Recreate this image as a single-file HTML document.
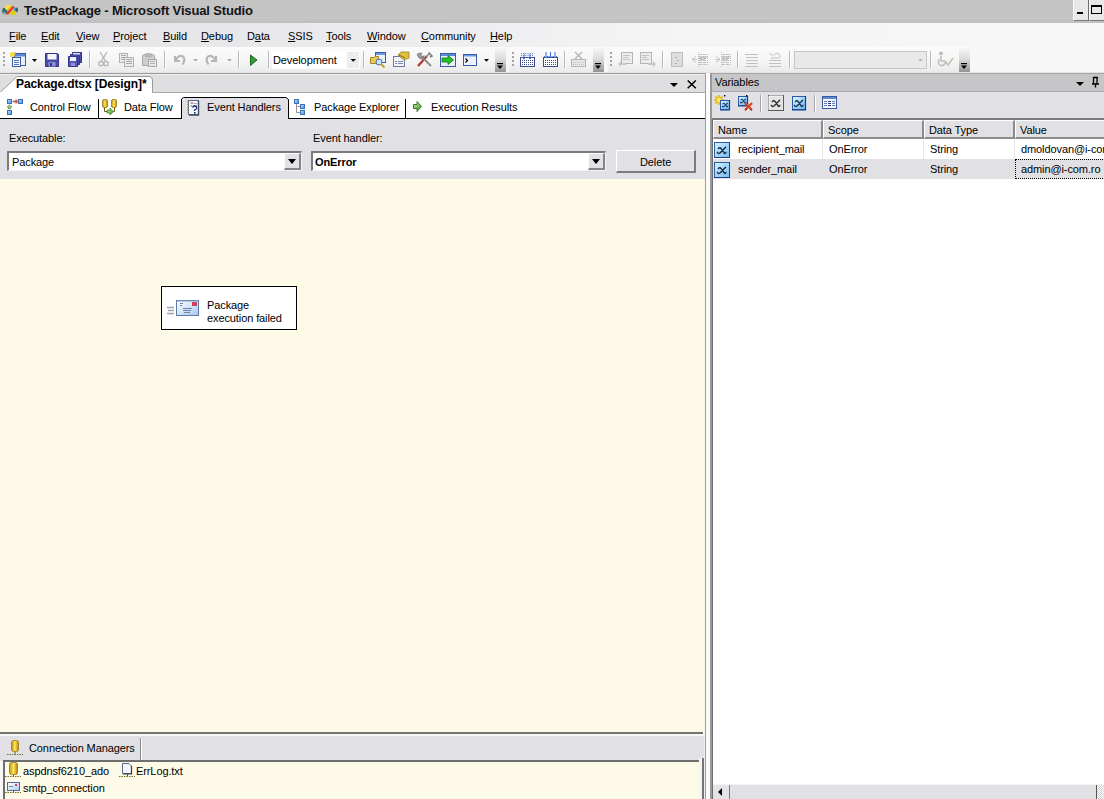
<!DOCTYPE html>
<html><head><meta charset="utf-8">
<style>
*{margin:0;padding:0;box-sizing:border-box}
html,body{width:1104px;height:799px;overflow:hidden;background:#f7f7f7;font-family:"Liberation Sans",sans-serif;font-size:11px;line-height:13px;color:#000}
body{position:relative}
.a{position:absolute}
.t{position:absolute;white-space:nowrap;letter-spacing:-0.1px}
.u{text-decoration:underline;text-underline-offset:1px}
.sep{position:absolute;width:1px;background:#b8b8b8;box-shadow:1px 0 0 #fff}
.grip{position:absolute;width:2px;height:14px;background:repeating-linear-gradient(#a3a3a3 0 2px,transparent 2px 4px)}
.chev{position:absolute;top:48px;width:11px;height:25px;background:linear-gradient(#f6f6f6,#dadada 45%,#8e8e8e)}
.bar{position:absolute;top:47px;height:26px;background:linear-gradient(#fbfbfb,#f5f5f5 55%,#e9e9e9)}
.tri{position:absolute;width:0;height:0;border-style:solid;border-color:#000 transparent transparent transparent}
.combo{position:absolute;background:#fff;border-top:2px solid #7c7c7c;border-left:2px solid #7c7c7c;border-bottom:1px solid #f3f3f3;border-right:1px solid #f3f3f3}
.ddb{position:absolute;background:#e2e1e5;border-right:2px solid #858585;border-bottom:2px solid #858585;border-top:1px solid #fff;border-left:1px solid #fff}
.hdr{position:absolute;height:19px;background:#e1e0e4;border-top:1px solid #fff;border-left:1px solid #fff;border-right:2px solid #8c8c8c;border-bottom:2px solid #8c8c8c}
</style></head><body>
<!-- title bar -->
<div class="a" style="left:0;top:0;width:1104px;height:23px;background:linear-gradient(#c4c4c4,#c4c4c4 72%,#c7c7c9 76%,#c1c1c3 90%,#bfbfc1)"></div>
<span class="t" style="left:24px;top:3px;font-size:13px;line-height:15px;font-weight:bold;color:#141414;letter-spacing:-0.15px">TestPackage - Microsoft Visual Studio</span>
<div class="a" style="left:1073px;top:0;width:16px;height:21px;background:#e8e8ea;border-right:1px solid #6a6a6a;border-bottom:1px solid #7a7a7a;border-left:1px solid #fafafa"></div>
<div class="a" style="left:1077px;top:12px;width:6px;height:2px;background:#000"></div>
<div class="a" style="left:1089px;top:0;width:15px;height:21px;background:#e8e8ea;border-bottom:1px solid #7a7a7a;border-left:1px solid #fafafa"></div>
<div class="a" style="left:1091px;top:5px;width:11px;height:9px;border:1px solid #000;border-top-width:2px"></div>
<!-- menu bar -->
<div class="a" style="left:0;top:23px;width:1104px;height:24px;background:linear-gradient(90deg,#e3e3e6 0,#e9e9eb 290px,#f0f0f2 530px,#f5f5f5 700px,#f7f7f7 100%)"></div>
<span class="t" style="left:9px;top:30px"><span class="u">F</span>ile</span>
<span class="t" style="left:41px;top:30px"><span class="u">E</span>dit</span>
<span class="t" style="left:76px;top:30px"><span class="u">V</span>iew</span>
<span class="t" style="left:113px;top:30px"><span class="u">P</span>roject</span>
<span class="t" style="left:163px;top:30px"><span class="u">B</span>uild</span>
<span class="t" style="left:201px;top:30px"><span class="u">D</span>ebug</span>
<span class="t" style="left:247px;top:30px">D<span class="u">a</span>ta</span>
<span class="t" style="left:288px;top:30px"><span class="u">S</span>SIS</span>
<span class="t" style="left:326px;top:30px"><span class="u">T</span>ools</span>
<span class="t" style="left:367px;top:30px"><span class="u">W</span>indow</span>
<span class="t" style="left:421px;top:30px"><span class="u">C</span>ommunity</span>
<span class="t" style="left:490px;top:30px"><span class="u">H</span>elp</span>
<!-- toolbar row -->
<div class="bar" style="left:0;width:505px"></div>
<div class="chev" style="left:495px"></div>
<div class="bar" style="left:509px;width:95px"></div>
<div class="chev" style="left:593px"></div>
<div class="bar" style="left:608px;width:362px"></div>
<div class="chev" style="left:959px"></div>
<div class="grip" style="left:3px;top:52px"></div>
<div class="grip" style="left:512px;top:52px"></div>
<div class="grip" style="left:610px;top:52px"></div>
<div class="sep" style="left:89px;top:51px;height:17px"></div>
<div class="sep" style="left:164px;top:51px;height:17px"></div>
<div class="sep" style="left:238px;top:51px;height:17px"></div>
<div class="sep" style="left:268px;top:51px;height:17px"></div>
<div class="sep" style="left:363px;top:51px;height:17px"></div>
<div class="sep" style="left:564px;top:51px;height:17px"></div>
<div class="sep" style="left:662px;top:51px;height:17px"></div>
<div class="sep" style="left:737px;top:51px;height:17px"></div>
<div class="sep" style="left:789px;top:51px;height:17px"></div>
<div class="sep" style="left:930px;top:51px;height:17px"></div>
<div class="a" style="left:272px;top:51px;width:88px;height:18px;background:#fff"></div>
<div class="a" style="left:347px;top:52px;width:12px;height:16px;background:#ececec"></div>
<span class="t" style="left:273px;top:54px">Development</span>
<div class="a" style="left:794px;top:51px;width:133px;height:18px;background:#e9e9e9;border:1px solid #c6c6c6"></div>
<div class="a" style="left:0;top:72px;width:1104px;height:1px;background:#e2e2e2"></div>

<!-- document window -->
<div class="a" style="left:0;top:73px;width:705px;height:20px;background:#dfdfe2;border-top:1px solid #9c9c9c;border-bottom:1px solid #a9a9a9"></div>
<div class="a" style="left:0;top:74px;width:705px;height:1px;background:#ececee"></div>
<svg class="a" style="left:0;top:73px" width="160" height="21"><path d="M0 19.5 L16.5 4 Q17.5 3.5 19 3.5 L149 3.5 Q152.5 3.5 152.5 7 L152.5 19.5" fill="#fff" stroke="#9a9a9a"/><rect x="0" y="19" width="152" height="2" fill="#fff"/></svg>
<span class="t" style="left:16px;top:78px;font-size:12px;line-height:13px;font-weight:bold">Package.dtsx [Design]*</span>
<div class="tri" style="left:670px;top:83px;border-width:4px 4px 0 4px"></div>
<svg class="a" style="left:687px;top:80px" width="10" height="9"><path d="M0.7 0.5 L8.8 8.3 M8.8 0.5 L0.7 8.3" stroke="#000" stroke-width="1.5"/></svg>
<div class="a" style="left:0;top:93px;width:705px;height:26px;background:#fff"></div>
<div class="a" style="left:0;top:118px;width:705px;height:1px;background:#000"></div>
<svg class="a" style="left:180px;top:96px" width="110" height="24"><path d="M1.5 23 L1.5 3 L3.5 1.5 L106 1.5 L108.5 3.5 L108.5 23" fill="#e1e0e4" stroke="#000"/></svg>
<div class="a" style="left:98px;top:99px;width:1px;height:19px;background:#000"></div>
<div class="a" style="left:405px;top:99px;width:1px;height:19px;background:#000"></div>
<span class="t" style="left:30px;top:101px">Control Flow</span>
<span class="t" style="left:124px;top:101px">Data Flow</span>
<span class="t" style="left:207px;top:101px">Event Handlers</span>
<span class="t" style="left:314px;top:101px">Package Explorer</span>
<span class="t" style="left:431px;top:101px">Execution Results</span>
<!-- executable panel -->
<div class="a" style="left:0;top:119px;width:705px;height:60px;background:#e1e0e4"></div>
<span class="t" style="left:9px;top:132px">Executable:</span>
<span class="t" style="left:313px;top:132px">Event handler:</span>
<div class="combo" style="left:7px;top:151px;width:295px;height:20px"></div>
<span class="t" style="left:12px;top:156px">Package</span>
<div class="ddb" style="left:284px;top:153px;width:17px;height:17px"></div>
<div class="tri" style="left:288px;top:159px;border-width:5px 4.5px 0 4.5px"></div>
<div class="combo" style="left:311px;top:151px;width:295px;height:20px"></div>
<span class="t" style="left:315px;top:156px;font-weight:bold">OnError</span>
<div class="ddb" style="left:588px;top:153px;width:17px;height:17px"></div>
<div class="tri" style="left:592px;top:159px;border-width:5px 4.5px 0 4.5px"></div>
<div class="a" style="left:616px;top:150px;width:80px;height:23px;background:#e1e0e4;border-top:1px solid #fff;border-left:1px solid #fff;border-right:2px solid #7c7c7c;border-bottom:2px solid #7c7c7c"></div>
<span class="t" style="left:640px;top:156px">Delete</span>
<!-- canvas -->
<div class="a" style="left:0;top:179px;width:705px;height:554px;background:#fefae8"></div>
<div class="a" style="left:161px;top:286px;width:136px;height:44px;background:#fff;border:1px solid #000"></div>
<span class="t" style="left:207px;top:299px">Package</span>
<span class="t" style="left:207px;top:312px">execution failed</span>
<!-- connection managers -->
<div class="a" style="left:0;top:732px;width:703px;height:2px;background:#727272"></div>
<div class="a" style="left:0;top:734px;width:705px;height:2px;background:#f6f6f6"></div>
<div class="a" style="left:0;top:736px;width:705px;height:25px;background:#e1e0e4"></div>
<div class="a" style="left:140px;top:738px;width:2px;height:22px;background:#8a8a8a;border-right:1px solid #fff"></div>
<span class="t" style="left:29px;top:742px">Connection Managers</span>
<div class="a" style="left:3px;top:760px;width:696px;height:39px;background:#fefae8;border-top:2px solid #6e6e6e;border-left:2px solid #6e6e6e"></div>
<div class="a" style="left:699px;top:758px;width:3px;height:41px;background:#f4f4f4"></div>
<div class="a" style="left:702px;top:758px;width:2px;height:41px;background:#747474"></div>
<div class="a" style="left:704px;top:736px;width:1px;height:63px;background:#f0f0f0"></div>
<span class="t" style="left:23px;top:765px">aspdnsf6210_ado</span>
<span class="t" style="left:136px;top:765px">ErrLog.txt</span>
<span class="t" style="left:23px;top:782px">smtp_connection</span>
<!-- splitter -->
<div class="a" style="left:705px;top:73px;width:1px;height:726px;background:#9c9c9c"></div>
<div class="a" style="left:706px;top:73px;width:4px;height:726px;background:#fbfbfb"></div>
<!-- variables -->
<div class="a" style="left:710px;top:73px;width:394px;height:726px;background:#fff"></div>
<div class="a" style="left:710px;top:73px;width:2px;height:726px;background:#999"></div><div class="a" style="left:712px;top:73px;width:1px;height:726px;background:#6e6e6e"></div>
<div class="a" style="left:712px;top:73px;width:392px;height:19px;background:#c6c6c8;border-top:1px solid #a4a4a4;border-bottom:1px solid #a8a8a8"></div>
<span class="t" style="left:715px;top:76px">Variables</span>
<div class="tri" style="left:1076px;top:82px;border-width:4px 4px 0 4px"></div>
<svg class="a" style="left:1090px;top:76px" width="10" height="14"><path d="M3.5 1 V8 M7 1 V8 M2 8 H9 M5.5 8 V11.5 M3 1.5 H8" stroke="#000" stroke-width="1.3" fill="none"/></svg>
<div class="a" style="left:712px;top:92px;width:392px;height:26px;background:#e1e0e4"></div>
<div class="sep" style="left:760px;top:95px;height:17px;background:#a4a4a4"></div>
<div class="sep" style="left:814px;top:95px;height:17px;background:#a4a4a4"></div>
<div class="a" style="left:712px;top:118px;width:392px;height:2px;background:#7c7c7c"></div>
<div class="hdr" style="left:713px;top:120px;width:110px"></div>
<div class="hdr" style="left:823px;top:120px;width:101px"></div>
<div class="hdr" style="left:924px;top:120px;width:91px"></div>
<div class="hdr" style="left:1015px;top:120px;width:100px"></div>
<span class="t" style="left:718px;top:124px">Name</span>
<span class="t" style="left:828px;top:124px">Scope</span>
<span class="t" style="left:929px;top:124px">Data Type</span>
<span class="t" style="left:1020px;top:124px">Value</span>
<div class="a" style="left:713px;top:159px;width:391px;height:20px;background:#e1e0e4"></div>
<div class="a" style="left:822px;top:139px;width:1px;height:20px;background:#e6e6e6"></div>
<div class="a" style="left:923px;top:139px;width:1px;height:20px;background:#e6e6e6"></div>
<div class="a" style="left:1014px;top:139px;width:1px;height:20px;background:#e6e6e6"></div>
<span class="t" style="left:738px;top:143px">recipient_mail</span>
<span class="t" style="left:829px;top:143px">OnError</span>
<span class="t" style="left:930px;top:143px">String</span>
<span class="t" style="left:1021px;top:143px">dmoldovan@i-com.ro</span>
<span class="t" style="left:738px;top:163px">sender_mail</span>
<span class="t" style="left:829px;top:163px">OnError</span>
<span class="t" style="left:930px;top:163px">String</span>
<span class="t" style="left:1021px;top:163px">admin@i-com.ro</span>
<div class="a" style="left:1015px;top:159px;width:100px;height:20px;border:1px dotted #000"></div>
<!-- scrollbar -->
<div class="a" style="left:713px;top:784px;width:391px;height:15px;background:#e1e0e4;border-top:1px solid #f4f4f4"></div>
<div class="a" style="left:714px;top:785px;width:16px;height:14px;background:#e4e3e7;border-right:1px solid #7a7a7a"></div>
<div class="tri" style="left:718px;top:788px;border-width:4px 4px 4px 0;border-color:transparent #000 transparent transparent"></div>
<div class="a" style="left:1096px;top:785px;width:1px;height:14px;background:#555"></div>
<div class="a" style="left:1097px;top:785px;width:7px;height:14px;background:repeating-conic-gradient(#fff 0 25%,#d0d0d0 0 50%) 0 0/2px 2px"></div>
<svg class="a" style="left:0;top:0" width="1104" height="799">
<defs>
<linearGradient id="gb" x1="0" y1="0" x2="1" y2="1"><stop offset="0" stop-color="#d8efff"/><stop offset="1" stop-color="#5aa6ec"/></linearGradient>
<linearGradient id="gb2" x1="0" y1="0" x2="0" y2="1"><stop offset="0" stop-color="#e6f4ff"/><stop offset="1" stop-color="#8cc8f8"/></linearGradient>
<linearGradient id="gy" x1="0" y1="0" x2="1" y2="0"><stop offset="0" stop-color="#c89a10"/><stop offset="0.45" stop-color="#ffe870"/><stop offset="1" stop-color="#b88a08"/></linearGradient>
<linearGradient id="gg" x1="0" y1="0" x2="1" y2="1"><stop offset="0" stop-color="#c8f0a8"/><stop offset="1" stop-color="#3a9a2a"/></linearGradient>
<linearGradient id="gw" x1="0" y1="0" x2="1" y2="1"><stop offset="0" stop-color="#ffffff"/><stop offset="1" stop-color="#a8c8f0"/></linearGradient>
</defs>
<!-- VS logo -->
<g>
<ellipse cx="4.8" cy="11" rx="2.6" ry="3.2" fill="#2a6a70"/>
<ellipse cx="4.5" cy="13" rx="1.5" ry="1.5" fill="#7ac8c0" opacity="0.7"/>
<ellipse cx="16.3" cy="9.8" rx="1.9" ry="2.4" fill="#406070"/>
<ellipse cx="14.8" cy="9" rx="1.3" ry="1.6" fill="#4a90c8"/>
<ellipse cx="8" cy="7.5" rx="3.2" ry="2.8" fill="#f0e040"/>
<ellipse cx="13.2" cy="12.8" rx="3" ry="2.4" fill="#d8d018"/>
<path d="M6 13.2 L12.2 6.2 Q13.8 5.6 14.4 7.2 L8.6 14.2 Q6.6 15 6 13.2Z" fill="#e03a20"/>
<path d="M7 10.5 L10.5 6.8 L11.8 7.4 L8 11.4Z" fill="#f89030" opacity="0.8"/>
</g>
<!-- toolbar: new project -->
<g>
<rect x="14.5" y="53.5" width="11" height="12" fill="#e8f0fb" stroke="#3b5aa8"/>
<rect x="15" y="54" width="10" height="2.5" fill="#5a8ad8"/>
<path d="M10 53 L12 55 M13 52 V55 M10 56 H12 M16 52 L14 55" stroke="#f3c814" stroke-width="1.3"/>
<circle cx="12.5" cy="55" r="2.3" fill="#f8dc3a" opacity="0.8"/>
<rect x="12.5" y="57.5" width="8" height="9" fill="#f4f8ff" stroke="#3b5aa8"/>
<path d="M14 60.5 H19 M14 62.5 H19 M14 64.5 H19" stroke="#5a78c0" stroke-width="1"/>
</g>
<path d="M32 59 H37 L34.5 62Z" fill="#000"/>
<!-- save -->
<g>
<path d="M45.5 53.5 H57.5 L58.5 54.5 V66.5 H45.5Z" fill="#4a4ea8" stroke="#30348a"/>
<rect x="47.5" y="54" width="9" height="5.5" fill="#f4f4fa"/>
<rect x="48.5" y="62" width="7" height="4.5" fill="#8c90d0"/>
<rect x="50" y="63" width="2" height="3" fill="#30348a"/>
</g>
<!-- save all -->
<g>
<path d="M72.5 52.5 H81.5 V62.5 H72.5Z" fill="#4a4ea8" stroke="#30348a"/>
<path d="M70.5 54.5 H79.5 V64.5 H70.5Z" fill="#4a4ea8" stroke="#30348a"/>
<path d="M68.5 56.5 H77.5 V66.5 H68.5Z" fill="#5458b0" stroke="#30348a"/>
<rect x="70" y="57" width="6" height="4" fill="#f0f0f8"/>
<rect x="73" y="53" width="7" height="1.5" fill="#e0e0f0"/>
<rect x="71" y="63" width="4" height="3" fill="#9094d0"/>
</g>
<!-- cut (disabled) -->
<g stroke="#b4b4b4" fill="none" stroke-width="1.3">
<path d="M100 52 L105.5 61 M107 52 L101.5 61"/>
<circle cx="101" cy="63.5" r="2.2"/><circle cx="106" cy="63.5" r="2.2"/>
</g>
<!-- copy (disabled) -->
<g>
<rect x="119.5" y="53.5" width="8" height="9" fill="#ececec" stroke="#b0b0b0"/>
<path d="M121 55.5 H126 M121 57.5 H126 M121 59.5 H124" stroke="#a8a8a8"/>
<rect x="124.5" y="57.5" width="9" height="9" fill="#ececec" stroke="#b0b0b0"/>
<path d="M126 59.5 H132 M126 61.5 H132 M126 63.5 H132" stroke="#a8a8a8"/>
</g>
<!-- paste (disabled) -->
<g>
<path d="M142.5 56.5 Q142.5 54.5 145 54.5 H152 Q154.5 54.5 154.5 56.5 V65.5 H142.5Z" fill="#cdcdcd" stroke="#a8a8a8"/>
<rect x="145.5" y="53.5" width="6" height="3" rx="1" fill="#bababa" stroke="#a0a0a0" stroke-width="0.6"/>
<rect x="148.5" y="59.5" width="8" height="7" fill="#e8e8e8" stroke="#a8a8a8"/>
<path d="M150 61.5 H155 M150 63.5 H155" stroke="#b4b4b4"/>
</g>
<!-- undo/redo disabled -->
<g stroke="#b6b6b6" fill="none" stroke-width="2.2">
<path d="M175 56 V61 H180" /><path d="M175.5 60.5 Q179 54 183 56.5 Q186 59 182.5 64.5"/>
<path d="M216 56 V61 H211"/><path d="M215.5 60.5 Q212 54 208 56.5 Q205 59 208.5 64.5"/>
</g>
<path d="M193 59 H198 L195.5 61.5Z" fill="#a8a8a8"/>
<path d="M227 59 H232 L229.5 61.5Z" fill="#a8a8a8"/>
<!-- play -->
<path d="M250.5 55 L257 60 L250.5 65.5Z" fill="#3a963a" stroke="#1f6a1f"/>
<!-- combo arrow -->
<path d="M350.5 59 H356 L353.25 61.8Z" fill="#000"/>
</svg>
<svg class="a" style="left:0;top:0" width="1104" height="799">
<!-- solution explorer-ish: window + folder + magnifier -->
<g>
<rect x="375.5" y="52.5" width="10" height="10" fill="#eef4fc" stroke="#3b5aa8"/>
<rect x="376" y="53" width="9" height="2" fill="#6a9ae0"/>
<path d="M370.5 57.5 H374 L375 56.5 H378.5 V63.5 H370.5Z" fill="#e8c85a" stroke="#a88a20"/>
<circle cx="379" cy="62" r="3" fill="#c8e8f8" stroke="#4a6aa0"/>
<path d="M381 64 L384.5 67.5" stroke="#c8a030" stroke-width="2"/>
</g>
<!-- properties -->
<g>
<rect x="393.5" y="56.5" width="11" height="10" fill="#f4f4f8" stroke="#6a7a9a"/>
<path d="M395 61.5 H397 M398 61.5 H403 M395 63.5 H397 M398 63.5 H403" stroke="#7a8ab0"/>
<path d="M398 55 L401 52 H409 V58 L404 60 L400 57Z" fill="#e0c040" stroke="#9a8020" stroke-width="0.8"/>
<path d="M399 55 L405 58" stroke="#7a6a20" stroke-width="1"/>
</g>
<!-- toolbox: wrench & hammer -->
<g>
<path d="M418 66 L427 56" stroke="#c03030" stroke-width="2.2"/>
<path d="M426 57 L430 53" stroke="#8a8a8a" stroke-width="1.6"/>
<path d="M428.5 52.5 L432 56 L430 57" fill="none" stroke="#7a7a7a" stroke-width="1.5"/>
<path d="M431 66 L421 56" stroke="#8a8a8a" stroke-width="1.8"/>
<path d="M417 54.5 Q419 52 422 53.5 L420.5 56 L422.5 57.5 L424 55.5 Q424.5 58.5 422 59 Q419 59.5 417 54.5Z" fill="#a0a0a0" stroke="#6a6a6a" stroke-width="0.7"/>
</g>
<!-- green arrow window -->
<g>
<rect x="440.5" y="53.5" width="15" height="13" fill="#e8f0fc" stroke="#3b5aa8"/>
<rect x="441" y="54" width="14" height="2" fill="#5a8ad8"/>
<path d="M442 58 H448 V55.5 L453.5 60 L448 64.5 V62 H442Z" fill="#28c028" stroke="#107810" stroke-width="0.8"/>
</g>
<!-- command window -->
<g>
<rect x="463.5" y="54.5" width="13" height="11" fill="#eef2fa" stroke="#3b5aa8"/>
<rect x="464" y="55" width="12" height="1.5" fill="#6a9ae0"/>
<path d="M465.5 58.5 L467.5 60.5 L465.5 62.5" stroke="#000" fill="none" stroke-width="1.2"/>
</g>
<path d="M484 59 H489 L486.5 61.8Z" fill="#000"/>
<!-- chevrons -->
<g fill="#000">
<rect x="497" y="63" width="6" height="1.2"/><path d="M497 65.5 H503 L500 69Z"/>
<rect x="595" y="63" width="6" height="1.2"/><path d="M595 65.5 H601 L598 69Z"/>
<rect x="961" y="63" width="6" height="1.2"/><path d="M961 65.5 H967 L964 69Z"/>
</g>
<!-- breakpoint-ish icons -->
<g>
<rect x="520.5" y="57.5" width="14" height="9" fill="#fff" stroke="#3b4a88"/>
<path d="M522 60.5 H533 M522 62.5 H533 M522 64.5 H533" stroke="#3b4a88" stroke-dasharray="1 1"/>
<path d="M521 53.5 H534 M521 55.5 H534" stroke="#5a78c0" stroke-dasharray="1 1.2"/>
<path d="M524 54 V59 M522 57 L524 59 L526 57 M530 54 V59 M528 57 L530 59 L532 57" stroke="#3a6ad0" fill="none" stroke-width="1"/>
<rect x="543.5" y="57.5" width="14" height="9" fill="#fff" stroke="#3b4a88"/>
<path d="M545 60.5 H556 M545 62.5 H556 M545 64.5 H556" stroke="#3b4a88" stroke-dasharray="1 1"/>
<path d="M546 52 V58 M544 56 L546 58 L548 56 M550.5 52 V58 M548.5 56 L550.5 58 L552.5 56 M555 52 V58 M553 56 L555 58 L557 56" stroke="#3a6ad0" fill="none" stroke-width="1"/>
</g>
<!-- disabled keyboard x -->
<g>
<rect x="571.5" y="59.5" width="14" height="7" fill="#e8e8e8" stroke="#b4b4b4"/>
<path d="M573 62.5 H584 M573 64.5 H584" stroke="#bcbcbc" stroke-dasharray="1 1"/>
<path d="M575 52 L582 59 M582 52 L575 59" stroke="#b4b4b4" stroke-width="1.3"/>
</g>
<!-- disabled doc arrows -->
<g>
<rect x="621.5" y="52.5" width="11" height="11" fill="#ececec" stroke="#b4b4b4"/>
<path d="M623 55.5 H630 M623 57.5 H628 M623 59.5 H630" stroke="#c4c4c4"/>
<path d="M618 64 L621 61 V63 H626 V65 H621 V67Z" fill="#c8c8c8"/>
<rect x="640.5" y="52.5" width="11" height="11" fill="#ececec" stroke="#b4b4b4"/>
<path d="M642 55.5 H649 M642 57.5 H647 M642 59.5 H649" stroke="#c4c4c4"/>
<path d="M656 64 L653 61 V63 H648 V65 H653 V67Z" fill="#c8c8c8"/>
</g>
<!-- disabled small doc -->
<g>
<rect x="671.5" y="52.5" width="11" height="14" fill="#dedede" stroke="#bdbdbd"/>
<path d="M675 57.5 H677 M677 60.5 H679 M675 63.5 H677" stroke="#b0b0b0"/>
</g>
<!-- outdent / indent -->
<g stroke="#bcbcbc">
<path d="M699 54.5 H708 M699 56.5 H708 M699 58.5 H708 M699 60.5 H708 M699 62.5 H708 M699 64.5 H708" stroke-dasharray="3 1"/>
<rect x="699" y="56" width="8" height="2" fill="#c8c8c8" stroke="none"/>
<rect x="699" y="59" width="6" height="2" fill="#c8c8c8" stroke="none"/>
<path d="M692 59.5 L696 56.5 M692 59.5 L696 62.5 M692 59.5 H697" stroke="#c4c4c4"/>
<path d="M698.5 52 V67" stroke="#c0c0c0" stroke-dasharray="1 1"/>
<path d="M722 54.5 H731 M722 56.5 H731 M722 58.5 H731 M722 60.5 H731 M722 62.5 H731 M722 64.5 H731" stroke-dasharray="3 1"/>
<rect x="722" y="56" width="8" height="2" fill="#c8c8c8" stroke="none"/>
<rect x="722" y="59" width="6" height="2" fill="#c8c8c8" stroke="none"/>
<path d="M720 59.5 L716 56.5 M720 59.5 L716 62.5 M715 59.5 H720" stroke="#c4c4c4"/>
<path d="M721.5 52 V67" stroke="#c0c0c0" stroke-dasharray="1 1"/>
</g>
<!-- comment / uncomment -->
<g stroke="#c0c0c0">
<path d="M745 54.5 H758 M746 57.5 H758 M746 60.5 H758 M746 63.5 H758 M745 66.5 H758"/>
<path d="M769 63.5 H781 M769 66.5 H781"/>
<path d="M770 53 L772 56 M773 55.5 Q776 52 779 54 Q782 57 778 58 H771" fill="none"/>
<path d="M769 60.5 H781"/>
</g>
<!-- combo arrow 2 -->
<path d="M918 59 H923 L920.5 61.5Z" fill="#b8b8b8"/>
<!-- accessibility disabled -->
<g fill="none" stroke="#c0c0c0" stroke-width="1.6">
<circle cx="941" cy="53.5" r="1.3" fill="#c0c0c0"/>
<path d="M941 56 V61 H945 L946 64"/>
<path d="M939 59 Q937 64 941 65.5 Q944 66 945 63"/>
<path d="M946 62 L948 65 L953 58" stroke="#b8c8b0"/>
</g>
</svg>
<svg class="a" style="left:0;top:0" width="1104" height="799">
<defs>
<linearGradient id="sq" x1="0" y1="0" x2="1" y2="1"><stop offset="0" stop-color="#bfe2ff"/><stop offset="1" stop-color="#3f8fe0"/></linearGradient>
<linearGradient id="cyl" x1="0" y1="0" x2="1" y2="0"><stop offset="0" stop-color="#c09010"/><stop offset="0.5" stop-color="#ffe860"/><stop offset="1" stop-color="#b08008"/></linearGradient>
<linearGradient id="grn" x1="0" y1="0" x2="1" y2="1"><stop offset="0" stop-color="#d0f0b0"/><stop offset="1" stop-color="#309020"/></linearGradient>
<linearGradient id="vx" x1="0" y1="0" x2="1" y2="1"><stop offset="0" stop-color="#e4f6ff"/><stop offset="1" stop-color="#62b6f4"/></linearGradient>
<linearGradient id="env" x1="0" y1="0" x2="1" y2="1"><stop offset="0" stop-color="#ffffff"/><stop offset="1" stop-color="#a8c8ec"/></linearGradient>
</defs>
<!-- control flow icon -->
<rect x="7.5" y="99.5" width="4" height="4" fill="url(#sq)" stroke="#3a70b8"/>
<rect x="18.5" y="99.5" width="4" height="4" fill="url(#sq)" stroke="#3a70b8"/>
<rect x="7.5" y="110.5" width="4" height="4" fill="url(#sq)" stroke="#3a70b8"/>
<path d="M13 101 H16 V99.5 L18 101.5 L16 103.5 V102 H13Z" fill="#e06050" stroke="#b04030" stroke-width="0.6"/>
<path d="M9.5 105 L12 107 H10.5 V109 H8.5 V107 H7Z" fill="#a0d070" stroke="#508030" stroke-width="0.6"/>
<!-- data flow icon -->
<rect x="102.5" y="99.5" width="5" height="8" rx="1.5" fill="url(#cyl)" stroke="#9a7a10" stroke-width="0.8"/>
<rect x="111.5" y="99.5" width="5" height="8" rx="1.5" fill="url(#cyl)" stroke="#9a7a10" stroke-width="0.8"/>
<path d="M104.5 107.5 V111.5 H107 M114.5 107.5 V111.5 H113" stroke="#6a5a10" fill="none"/>
<path d="M107 110 H110 V108 L113.5 111.5 L110 115 V113 H107Z" fill="url(#grn)" stroke="#3a7a2a" stroke-width="0.7"/>
<!-- event handlers icon -->
<rect x="188.5" y="100.5" width="10" height="14" fill="#f6f8fc" stroke="#5a6a8a"/>
<path d="M198.5 101 V115 H189" stroke="#404a60" stroke-width="1.4" fill="none"/>
<path d="M187 102 H189 M187 104.5 H189 M187 107 H189 M187 109.5 H189 M187 112 H189" stroke="#7a9a40" stroke-width="1.2"/>
<path d="M190.5 103 H193 M190.5 106 H192" stroke="#c04040"/>
<path d="M193 103.5 H197 M193 105.5 H197" stroke="#a0b0c8"/>
<path d="M192.5 107.5 Q193 105.8 195 106 Q197 106.5 196.5 108.5 Q196 109.5 194.5 110 V111" stroke="#1a2a70" stroke-width="1.3" fill="none"/>
<rect x="194" y="112" width="1.6" height="1.6" fill="#1a2a70"/>
<!-- package explorer icon -->
<rect x="294.5" y="99.5" width="4" height="4" fill="url(#sq)" stroke="#3a70b8"/>
<rect x="300.5" y="104.5" width="4" height="4" fill="url(#sq)" stroke="#3a70b8"/>
<rect x="300.5" y="110.5" width="4" height="4" fill="url(#sq)" stroke="#3a70b8"/>
<path d="M296.5 104 V112.5 H300 M296.5 106.5 H300" stroke="#a09090" fill="none"/>
<!-- execution results arrow -->
<path d="M413.5 104.5 H417 V101.5 L421.5 106.5 L417 111.5 V108.5 H413.5Z" fill="url(#grn)" stroke="#2a6a20" stroke-width="0.9"/>
<!-- variables toolbar: add variable -->
<path d="M719 95 L720 97.5 L722.5 96.5 L721.5 99 L724 100 L721.5 101 L722.5 103.5 L720 102.5 L719 105 L718 102.5 L715.5 103.5 L716.5 101 L714 100 L716.5 99 L715.5 96.5 L718 97.5Z" fill="#f8d020" stroke="#e0a000" stroke-width="0.6"/>
<circle cx="719" cy="100" r="2" fill="#ffe870"/>
<rect x="720.5" y="100.5" width="9" height="9" fill="url(#vx)" stroke="#2a5aa8"/>
<path d="M729.5 100 V110 H720" stroke="#1a3a88" stroke-width="1.2" fill="none"/>
<rect x="724" y="95" width="1.4" height="1.4" fill="#000"/>
<path transform="translate(277.6,11.7) scale(0.62)" d="M717.3 152.3 Q718.3 154.3 720 153 L725.6 147.3 M718.3 148.6 Q719.8 146.9 721.2 148.6 L724.4 153.2 Q725.2 154 725.9 152.4" stroke="#1a3a70" stroke-width="1.8" fill="none" stroke-linecap="round"/>
<!-- delete variable -->
<rect x="738.5" y="96.5" width="9" height="9" fill="url(#vx)" stroke="#2a5aa8"/>
<path d="M747.5 96 V106 H738" stroke="#1a3a88" stroke-width="1.2" fill="none"/>
<rect x="746" y="95" width="1.4" height="1.4" fill="#000"/>
<path transform="translate(295.6,7.7) scale(0.62)" d="M717.3 152.3 Q718.3 154.3 720 153 L725.6 147.3 M718.3 148.6 Q719.8 146.9 721.2 148.6 L724.4 153.2 Q725.2 154 725.9 152.4" stroke="#1a3a70" stroke-width="1.8" fill="none" stroke-linecap="round"/>
<path d="M745 103 L752 110 M752 103 L745 110" stroke="#e04020" stroke-width="2.2"/>
<path d="M745.5 110.5 L747 109 M750 109 L751.5 110.5" stroke="#802010" stroke-width="1"/>
<!-- gray x button -->
<rect x="768.5" y="95.5" width="15" height="15" fill="#e4e4e4" stroke="#5a5a5a"/>
<path d="M769 96 H783 M769 96 V110" stroke="#fafafa"/>
<path transform="translate(54,-47)" d="M717.3 152.3 Q718.3 154.3 720 153 L725.6 147.3 M718.3 148.6 Q719.8 146.9 721.2 148.6 L724.4 153.2 Q725.2 154 725.9 152.4" stroke="#2a2a2a" stroke-width="1.35" fill="none" stroke-linecap="round"/>
<!-- blue x button -->
<rect x="792.5" y="96.5" width="13" height="13" fill="url(#vx)" stroke="#2a5aa8"/>
<path d="M805.5 96 V110 H792" stroke="#123a90" stroke-width="1.2" fill="none"/>
<path transform="translate(77,-47)" d="M717.3 152.3 Q718.3 154.3 720 153 L725.6 147.3 M718.3 148.6 Q719.8 146.9 721.2 148.6 L724.4 153.2 Q725.2 154 725.9 152.4" stroke="#1a3050" stroke-width="1.35" fill="none" stroke-linecap="round"/>
<!-- grid icon -->
<rect x="822.5" y="96.5" width="14" height="12" fill="#f4f8ff" stroke="#3a5a98"/>
<rect x="823" y="97" width="13" height="2" fill="#5a8ad8"/>
<path d="M824 101.5 H827 M824 103.5 H827 M824 105.5 H827 M828 101.5 H831 M828 103.5 H831 M828 105.5 H831 M832 101.5 H835 M832 103.5 H835 M832 105.5 H835" stroke="#6a7ab8"/>
<path d="M828 101.5 H831 M828 103.5 H831 M828 105.5 H831" stroke="#2a3a88"/>
<!-- row icons -->
<defs><linearGradient id="vx2" x1="0" y1="0" x2="1" y2="1"><stop offset="0" stop-color="#d4f2ff"/><stop offset="1" stop-color="#74bcf6"/></linearGradient></defs>
<rect x="714.5" y="142.5" width="15" height="15" fill="url(#vx2)" stroke="#2f5f9e"/>
<path d="M714 157.5 H730 M729.5 142 V158" stroke="#1e3c88"/>
<path transform="translate(0,0)" d="M717.3 152.3 Q718.3 154.3 720 153 L725.6 147.3 M718.3 148.6 Q719.8 146.9 721.2 148.6 L724.4 153.2 Q725.2 154 725.9 152.4" stroke="#17283c" stroke-width="1.35" fill="none" stroke-linecap="round"/>
<rect x="714.5" y="162.5" width="15" height="15" fill="url(#vx2)" stroke="#2f5f9e"/>
<path d="M714 177.5 H730 M729.5 162 V178" stroke="#1e3c88"/>
<path transform="translate(0,20)" d="M717.3 152.3 Q718.3 154.3 720 153 L725.6 147.3 M718.3 148.6 Q719.8 146.9 721.2 148.6 L724.4 153.2 Q725.2 154 725.9 152.4" stroke="#17283c" stroke-width="1.35" fill="none" stroke-linecap="round"/>
<!-- task envelope -->
<g>
<rect x="176.5" y="300.5" width="22" height="15" fill="url(#env)" stroke="#5a7aa8"/>
<path d="M177 301 L198 301" stroke="#8aa0c0"/>
<rect x="192" y="302" width="5" height="4" fill="#d04060"/>
<path d="M180 303.5 H183 M180 305.5 H182 M183 308.5 H192 M183 310.5 H191 M184 312.5 H190" stroke="#6a84b0"/>
<path d="M167 307.5 H174 M168 310.5 H174 M167 313.5 H174" stroke="#9aa4b4" stroke-width="1.3"/>
</g>
<!-- connection managers tab icon -->
<g>
<rect x="11.5" y="740.5" width="7" height="11" rx="2" fill="url(#cyl)" stroke="#9a7a10" stroke-width="0.8"/>
<path d="M15 752 V754" stroke="#6a5a10"/>
<path d="M7 754.5 H23" stroke="#7a6a20" stroke-dasharray="1.5 1"/>
</g>
<!-- aspdnsf -->
<g>
<rect x="9.5" y="762.5" width="8" height="12" rx="2" fill="url(#cyl)" stroke="#9a7a10" stroke-width="0.8"/>
<path d="M13.5 775 V776" stroke="#6a5a10"/>
<path d="M5 776.5 H21" stroke="#7a6a20" stroke-dasharray="1.5 1"/>
</g>
<!-- errlog -->
<g>
<path d="M122.5 763.5 H129 L131.5 766 V773.5 H122.5Z" fill="#f4f6fc" stroke="#5a6a88"/>
<path d="M131.5 766 V774 H123" stroke="#303a50" stroke-width="1.2" fill="none"/>
<path d="M127.5 774 V776" stroke="#6a5a10"/>
<path d="M119 776.5 H135" stroke="#7a6a20" stroke-dasharray="1.5 1"/>
</g>
<!-- smtp -->
<g>
<rect x="7.5" y="782.5" width="12" height="8" fill="url(#env)" stroke="#5a6a98"/>
<rect x="15" y="784" width="2" height="2" fill="#d04060"/>
<path d="M9 786.5 H13" stroke="#7a8ab8"/>
<path d="M13.5 791 V792" stroke="#6a5a10"/>
<path d="M5 792.5 H21" stroke="#7a6a20" stroke-dasharray="1.5 1"/>
</g>
</svg>

</body></html>
